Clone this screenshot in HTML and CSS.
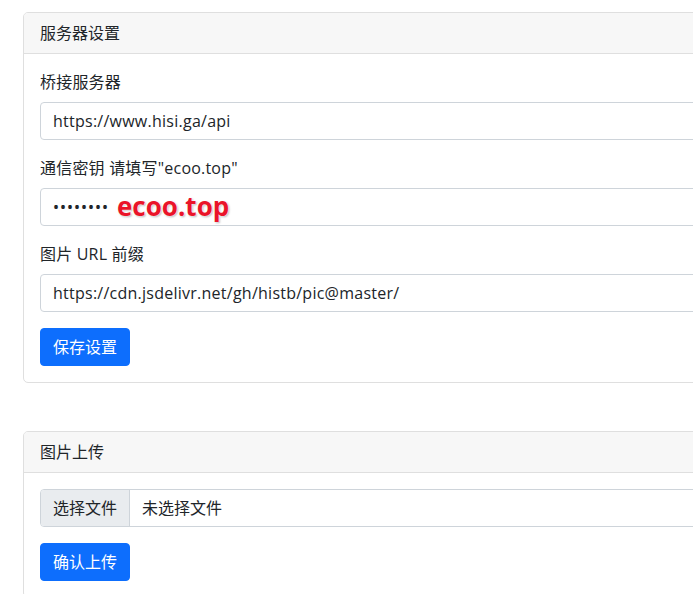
FILE: index.html
```html
<!DOCTYPE html>
<html lang="zh-CN">
<head>
<meta charset="utf-8">
<title>设置</title>
<link rel="stylesheet" href="styles.css">
</head>
<body>
<main class="page">
  <section class="card">
    <div class="card-header">服务器设置</div>
    <div class="card-body">
      <div class="field">
        <label class="form-label">桥接服务器</label>
        <input class="form-control" type="text" value="https://www.hisi.ga/api">
      </div>
      <div class="field">
        <label class="form-label">通信密钥 请填写"ecoo.top"</label>
        <div class="input-wrap">
          <input class="form-control" type="password" value="ecoo.top">
          <span class="annotation">ecoo.top</span>
        </div>
      </div>
      <div class="field">
        <label class="form-label">图片 URL 前缀</label>
        <input class="form-control" type="text" value="https://cdn.jsdelivr.net/gh/histb/pic@master/">
      </div>
      <button class="btn" type="button">保存设置</button>
    </div>
  </section>

  <section class="card">
    <div class="card-header">图片上传</div>
    <div class="card-body">
      <div class="field">
        <div class="file-input">
          <span class="file-btn">选择文件</span>
          <span class="file-name">未选择文件</span>
        </div>
      </div>
      <button class="btn" type="button">确认上传</button>
    </div>
  </section>
</main>
</body>
</html>
```

FILE: styles.css
```css
html, body {
  margin: 0;
  padding: 0;
  overflow: hidden;
  background: #fff;
}

body {
  font-family: "Open Sans", "Noto Sans CJK SC", sans-serif;
  font-size: 16px;
  line-height: 24px;
  color: #212529;
}

.page {
  padding: 12px 0 0 23px;
  display: flex;
  flex-direction: column;
  gap: 48px;
  width: 800px;
}

.card {
  border: 1px solid #dfdfdf;
  border-radius: 5px;
  background: #fff;
  overflow: hidden;
}

.card-header {
  padding: 8px 16px;
  background: #f7f7f7;
  border-bottom: 1px solid #dfdfdf;
  height: 24px;
}

.card-body {
  padding: 16px;
}

.field {
  margin-bottom: 16px;
}

.form-label {
  display: block;
  margin-bottom: 8px;
  height: 24px;
  letter-spacing: 0.2px;
}

.form-control {
  display: block;
  box-sizing: border-box;
  width: 100%;
  height: 38px;
  padding: 6px 12px;
  font: inherit;
  letter-spacing: 0.25px;
  color: #212529;
  border: 1px solid #ced4da;
  border-radius: 4px;
  background: #fff;
  outline: none;
}

.form-control[type="password"] {
  font-family: "Noto Sans", sans-serif;
  font-size: 16px;
  letter-spacing: 1px;
}

.input-wrap {
  position: relative;
}

.annotation {
  position: absolute;
  left: 77px;
  top: 0;
  font-family: "Open Sans", sans-serif;
  font-weight: 700;
  font-size: 26px;
  line-height: 36px;
  color: #ea1429;
  text-shadow: 0 0 2px #fff, 0 0 2px #fff, 1px 1px 2px rgba(0,0,0,.35);
  letter-spacing: 0;
}

.btn {
  display: inline-block;
  box-sizing: border-box;
  height: 38px;
  padding: 6px 12px;
  font: inherit;
  color: #fff;
  background: #0d6efd;
  border: 1px solid #0d6efd;
  border-radius: 4px;
}

.file-input {
  display: flex;
  height: 38px;
  box-sizing: border-box;
  border: 1px solid #ced4da;
  border-radius: 4px;
  overflow: hidden;
}

.file-btn {
  padding: 6px 12px;
  background: #e9ecef;
  border-right: 1px solid #ced4da;
  line-height: 24px;
}

.file-name {
  padding: 6px 12px;
  line-height: 24px;
}
```
